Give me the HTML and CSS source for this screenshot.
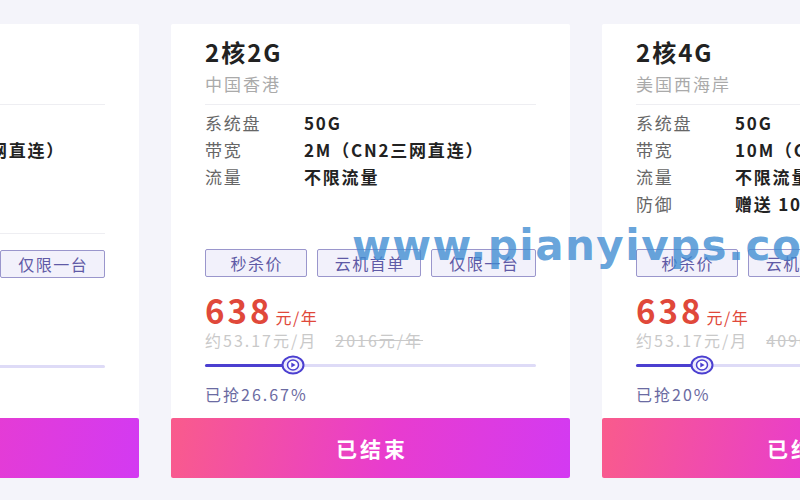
FILE: index.html
```html
<!DOCTYPE html>
<html lang="zh">
<head>
<meta charset="utf-8">
<title>云服务器秒杀</title>
<link rel="stylesheet" href="styles.css">
</head>
<body>
<div class="row">
  <div class="card">
    <div class="body">
      <div class="title">2核1G</div>
      <div class="sub">中国香港</div>
      <div class="specs specs-line">
        <div class="spec"><span class="k">系统盘</span><span class="v">40G</span></div>
        <div class="spec"><span class="k">带宽</span><span class="v">10M（CN2三网直连）</span></div>
        <div class="spec"><span class="k">流量</span><span class="v">不限流量</span></div>
      </div>
      <div class="tags"><span class="tag">秒杀价</span><span class="tag">云机首单</span><span class="tag">仅限一台</span></div>
      <div class="price"><span class="num">388</span><span class="unit">元/年</span></div>
      <div class="orig"><span>约32.33元/月</span><s>1456元/年</s></div>
      <div class="slider"><div class="fill" style="width:30%"></div><div class="thumb" style="left:30%"><svg width="24" height="20" viewBox="0 0 24 20"><ellipse cx="12" cy="10" rx="10.5" ry="8.5" fill="#eeecfc" stroke="#4b3fd0" stroke-width="2"/><ellipse cx="12" cy="10" rx="5.5" ry="5" fill="#fff" stroke="#4b3fd0" stroke-width="1.5"/><path d="M10.3 7.4 L14.6 10 L10.3 12.6 Z" fill="#4b3fd0"/></svg></div></div>
      <div class="sold">已抢30%</div>
    </div>
    <div class="btn">已结束</div>
  </div>

  <div class="card">
    <div class="body">
      <div class="title">2核2G</div>
      <div class="sub">中国香港</div>
      <div class="specs">
        <div class="spec"><span class="k">系统盘</span><span class="v">50G</span></div>
        <div class="spec"><span class="k">带宽</span><span class="v">2M（CN2三网直连）</span></div>
        <div class="spec"><span class="k">流量</span><span class="v">不限流量</span></div>
      </div>
      <div class="tags"><span class="tag">秒杀价</span><span class="tag">云机首单</span><span class="tag">仅限一台</span></div>
      <div class="price"><span class="num">638</span><span class="unit">元/年</span></div>
      <div class="orig"><span>约53.17元/月</span><s>2016元/年</s></div>
      <div class="slider"><div class="fill" style="width:26.67%"></div><div class="thumb" style="left:26.67%"><svg width="24" height="20" viewBox="0 0 24 20"><ellipse cx="12" cy="10" rx="10.5" ry="8.5" fill="#eeecfc" stroke="#4b3fd0" stroke-width="2"/><ellipse cx="12" cy="10" rx="5.5" ry="5" fill="#fff" stroke="#4b3fd0" stroke-width="1.5"/><path d="M10.3 7.4 L14.6 10 L10.3 12.6 Z" fill="#4b3fd0"/></svg></div></div>
      <div class="sold">已抢26.67%</div>
    </div>
    <div class="btn">已结束</div>
  </div>

  <div class="card">
    <div class="body">
      <div class="title">2核4G</div>
      <div class="sub">美国西海岸</div>
      <div class="specs">
        <div class="spec"><span class="k">系统盘</span><span class="v">50G</span></div>
        <div class="spec"><span class="k">带宽</span><span class="v">10M（CN2三网直连）</span></div>
        <div class="spec"><span class="k">流量</span><span class="v">不限流量</span></div>
        <div class="spec"><span class="k">防御</span><span class="v">赠送 10G防御</span></div>
      </div>
      <div class="tags"><span class="tag">秒杀价</span><span class="tag">云机首单</span><span class="tag">仅限一台</span></div>
      <div class="price"><span class="num">638</span><span class="unit">元/年</span></div>
      <div class="orig"><span>约53.17元/月</span><s>4096元/年</s></div>
      <div class="slider"><div class="fill" style="width:20%"></div><div class="thumb" style="left:20%"><svg width="24" height="20" viewBox="0 0 24 20"><ellipse cx="12" cy="10" rx="10.5" ry="8.5" fill="#eeecfc" stroke="#4b3fd0" stroke-width="2"/><ellipse cx="12" cy="10" rx="5.5" ry="5" fill="#fff" stroke="#4b3fd0" stroke-width="1.5"/><path d="M10.3 7.4 L14.6 10 L10.3 12.6 Z" fill="#4b3fd0"/></svg></div></div>
      <div class="sold">已抢20%</div>
    </div>
    <div class="btn">已结束</div>
  </div>
</div>
<div class="watermark">www.pianyivps.com</div>
</body>
</html>
```
FILE: styles.css
```css
html, body {
  margin: 0;
  padding: 0;
  width: 800px;
  height: 500px;
  overflow: hidden;
  background: #f4f4fa;
  font-family: "Noto Sans CJK SC", "Noto Sans", sans-serif;
  position: relative;
}

.row {
  display: flex;
  gap: 32px;
  margin-left: -260px;
  padding-top: 24px;
  width: 1400px;
}

.card {
  flex: 0 0 398px;
  height: 454px;
  background: #fff;
  display: flex;
  flex-direction: column;
  border-radius: 2px;
}

.body {
  padding: 12px 34px 0 34px;
  display: flex;
  flex-direction: column;
}

.title {
  font-size: 24px;
  line-height: 32px;
  height: 32px;
  font-weight: 700;
  letter-spacing: 2px;
  color: #222;
  white-space: nowrap;
}

.sub {
  margin-top: 6px;
  font-size: 17px;
  line-height: 20px;
  height: 20px;
  letter-spacing: 2px;
  color: #aaa;
  white-space: nowrap;
}

.specs {
  margin-top: 10px;
  border-top: 1px solid #eeeef2;
  padding-top: 4px;
  height: 124px;
}

.specs-line {
  border-bottom: 1px solid #eeeef2;
}

.spec {
  display: flex;
  font-size: 17px;
  line-height: 27px;
  height: 27px;
  letter-spacing: 1.8px;
  white-space: nowrap;
}

.k {
  width: 99px;
  flex: 0 0 99px;
  color: #666;
}

.v {
  color: #222;
  font-weight: 700;
}

.tags {
  margin-top: 16px;
  display: flex;
  gap: 10px;
}

.tag {
  flex: 0 0 auto;
  height: 26px;
  line-height: 26px;
  border: 1px solid #9a96cc;
  background: #f2f1fb;
  color: #5f5aa6;
  font-size: 16px;
  letter-spacing: 1.5px;
  text-indent: 1.5px;
  text-align: center;
  border-radius: 2px;
  white-space: nowrap;
}

.tag:nth-child(1) { width: 100px; }
.tag:nth-child(2) { width: 102px; }
.tag:nth-child(3) { width: 103px; }

.price {
  margin-top: 15px;
  height: 36px;
  display: flex;
  align-items: baseline;
  color: #e0483a;
  line-height: 36px;
  white-space: nowrap;
}

.num {
  font-size: 33px;
  font-weight: 700;
  letter-spacing: 3px;
}

.unit {
  font-size: 16px;
  letter-spacing: 1.5px;
  margin-left: 3px;
}

.orig {
  margin-top: 2px;
  height: 20px;
  font-size: 16px;
  line-height: 20px;
  letter-spacing: 2px;
  color: #c9c9c9;
  display: flex;
  gap: 18px;
  white-space: nowrap;
}

.orig s {
  color: #c9c9c9;
}

.slider {
  position: relative;
  margin-top: 5px;
  height: 20px;
}

.slider::before {
  content: "";
  position: absolute;
  left: 0;
  right: 0;
  top: 8.5px;
  height: 3px;
  border-radius: 2px;
  background: #dedbf7;
}

.fill {
  position: absolute;
  left: 0;
  top: 8.5px;
  height: 3px;
  border-radius: 2px;
  background: #4b3fd0;
}

.thumb {
  position: absolute;
  top: 0;
  width: 24px;
  height: 20px;
  margin-left: -12px;
}

.thumb svg {
  display: block;
}

.sold {
  margin-top: 9px;
  height: 20px;
  font-size: 16px;
  line-height: 20px;
  letter-spacing: 2px;
  color: #6b6ba2;
  white-space: nowrap;
}

.btn {
  margin-top: auto;
  height: 60px;
  line-height: 60px;
  text-align: center;
  color: #fff;
  font-size: 21px;
  font-weight: 700;
  letter-spacing: 3px;
  text-indent: 3px;
  background: linear-gradient(100deg, #f95b8c 0%, #e83ccf 55%, #d33af2 100%);
  border-radius: 2px;
  white-space: nowrap;
}

.watermark {
  position: absolute;
  left: 352px;
  top: 225px;
  font-family: "DejaVu Sans", sans-serif;
  font-weight: 700;
  font-size: 42px;
  line-height: 42px;
  letter-spacing: 1.5px;
  color: rgba(64, 140, 210, 0.8);
  white-space: nowrap;
  pointer-events: none;
}
```
